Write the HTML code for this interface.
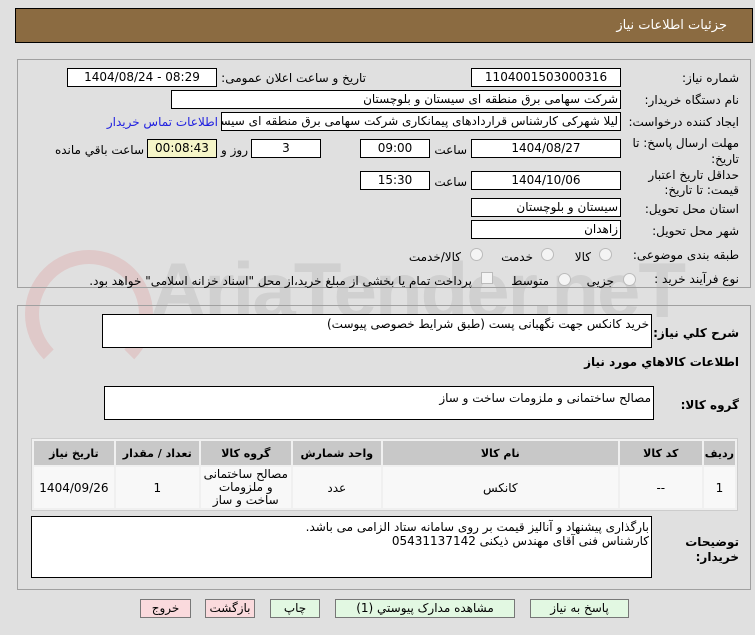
<!DOCTYPE html>
<html><head><meta charset="utf-8"><style>
body{margin:0;width:755px;height:635px;background:#e0e0e0;font-family:"DejaVu Sans","Liberation Sans",sans-serif;font-size:12px;color:#000;position:relative;overflow:hidden}
.a{position:absolute;white-space:nowrap}
.box{position:absolute;background:#fff;border:1px solid #000;box-sizing:border-box;height:19px;line-height:17px;text-align:center;font-size:12px;overflow:hidden;white-space:nowrap}
.r{text-align:right;padding-right:2px;direction:rtl}
.l{direction:rtl;text-align:right}
.panel{position:absolute;border:1px solid #a0a0a0;box-sizing:border-box}
.rad{position:absolute;width:11px;height:11px;border-radius:50%;border:1px solid #bbb;background:#f4f4f4}
.btn{position:absolute;top:599px;height:19px;border:1px solid #777;box-sizing:border-box;text-align:center;line-height:17px;font-size:12px}
table{position:absolute;border-collapse:separate;border-spacing:2px;background:#f0f0f0;border:1px solid #ccc}
td{text-align:center;font-size:12px}
th{background:#c8c8c8;font-weight:bold;height:22px;font-size:11px}
.b{font-weight:bold;font-size:12px}
</style></head><body>
<div class="a" style="left:150px;top:245px;font-size:78px;font-weight:bold;color:rgba(150,150,150,0.22);font-family:'Liberation Sans',sans-serif;letter-spacing:-2px">AriaTender.neT</div>
<div class="a" style="left:25px;top:250px;width:100px;height:100px;border:14px solid rgba(220,120,120,0.22);border-radius:50%;border-bottom-color:transparent"></div>

<div class="a" style="left:15px;top:8px;width:738px;height:35px;background:#8b6b41;border:1px solid #000;box-sizing:border-box"></div>
<div class="a l" style="right:28px;top:18px;color:#fff;font-size:13px">جزئیات اطلاعات نیاز</div>

<div class="panel" style="left:17px;top:59px;width:734px;height:229px"></div>
<div class="a l" style="right:16px;top:71px">شماره نیاز:</div>
<div class="box" style="left:471px;top:68px;width:150px">1104001503000316</div>
<div class="a l" style="right:389px;top:71px">تاریخ و ساعت اعلان عمومی:</div>
<div class="box" style="left:67px;top:68px;width:150px">1404/08/24 - 08:29</div>

<div class="a l" style="right:16px;top:93px">نام دستگاه خریدار:</div>
<div class="box r" style="left:171px;top:90px;width:450px">شرکت سهامی برق منطقه ای سیستان و بلوچستان</div>

<div class="a l" style="right:16px;top:115px">ایجاد کننده درخواست:</div>
<div class="box r" style="left:221px;top:112px;width:400px">لیلا شهرکی کارشناس قراردادهای پیمانکاری شرکت سهامی برق منطقه ای سیستان</div>
<div class="a l" style="right:537px;top:115px;color:#2020e0">اطلاعات تماس خریدار</div>

<div class="a l" style="right:16px;top:136px">مهلت ارسال پاسخ: تا</div>
<div class="a l" style="right:16px;top:152px">تاریخ:</div>
<div class="box" style="left:471px;top:139px;width:150px">1404/08/27</div>
<div class="a l" style="right:288px;top:143px">ساعت</div>
<div class="box" style="left:360px;top:139px;width:70px">09:00</div>
<div class="box" style="left:251px;top:139px;width:70px">3</div>
<div class="a l" style="right:507px;top:143px">روز و</div>
<div class="box" style="left:147px;top:139px;width:70px;background:#f5f5c8">00:08:43</div>
<div class="a l" style="right:611px;top:143px">ساعت باقي مانده</div>

<div class="a l" style="right:16px;top:168px">حداقل تاریخ اعتبار</div>
<div class="a l" style="right:16px;top:183px">قیمت: تا تاریخ:</div>
<div class="box" style="left:471px;top:171px;width:150px">1404/10/06</div>
<div class="a l" style="right:288px;top:175px">ساعت</div>
<div class="box" style="left:360px;top:171px;width:70px">15:30</div>

<div class="a l" style="right:16px;top:202px">استان محل تحویل:</div>
<div class="box r" style="left:471px;top:198px;width:150px">سیستان و بلوچستان</div>
<div class="a l" style="right:16px;top:224px">شهر محل تحویل:</div>
<div class="box r" style="left:471px;top:220px;width:150px">زاهدان</div>

<div class="a l" style="right:16px;top:248px">طبقه بندی موضوعی:</div>
<div class="rad" style="left:599px;top:248px"></div><div class="a l" style="right:164px;top:250px">کالا</div>
<div class="rad" style="left:541px;top:248px"></div><div class="a l" style="right:222px;top:250px">خدمت</div>
<div class="rad" style="left:470px;top:248px"></div><div class="a l" style="right:294px;top:250px">کالا/خدمت</div>

<div class="a l" style="right:16px;top:272px">نوع فرآیند خرید :</div>
<div class="rad" style="left:623px;top:273px"></div><div class="a l" style="right:141px;top:274px">جزیی</div>
<div class="rad" style="left:558px;top:273px"></div><div class="a l" style="right:206px;top:274px">متوسط</div>
<div class="a" style="left:481px;top:272px;width:10px;height:10px;border:1px solid #bbb;background:#f4f4f4"></div>
<div class="a l" style="right:283px;top:274px">پرداخت تمام یا بخشی از مبلغ خرید،از محل "اسناد خزانه اسلامی" خواهد بود.</div>

<div class="panel" style="left:17px;top:305px;width:734px;height:285px"></div>
<div class="a l b" style="right:16px;top:326px">شرح کلي نیاز:</div>
<div class="box r" style="left:102px;top:314px;width:550px;height:34px;line-height:18px">خرید کانکس جهت نگهبانی پست (طبق شرایط خصوصی پیوست)</div>
<div class="a l b" style="right:16px;top:355px">اطلاعات کالاهاي مورد نیاز</div>
<div class="a l b" style="right:16px;top:398px">گروه کالا:</div>
<div class="box r" style="left:104px;top:386px;width:550px;height:34px;line-height:22px">مصالح ساختمانی و ملزومات ساخت و ساز</div>

<table style="left:31px;top:438px;width:707px;direction:rtl">
<tr><th style="width:26px">ردیف</th><th style="width:80px">کد کالا</th><th style="width:233px">نام کالا</th><th style="width:86px">واحد شمارش</th><th style="width:88px">گروه کالا</th><th style="width:81px">تعداد / مقدار</th><th>تاریخ نیاز</th></tr>
<tr style="background:#f8f8f8;height:40px"><td>1</td><td>--</td><td>کانکس</td><td>عدد</td><td style="line-height:13px">مصالح ساختمانی و ملزومات ساخت و ساز</td><td>1</td><td>1404/09/26</td></tr>
</table>

<div class="a l b" style="right:16px;top:535px">توضیحات</div>
<div class="a l b" style="right:16px;top:550px">خریدار:</div>
<div class="box r" style="left:31px;top:516px;width:621px;height:62px;line-height:14px;text-align:right;padding-top:3px;white-space:normal">بارگذاری پیشنهاد و آنالیز قیمت بر روی سامانه ستاد الزامی می باشد.<br>کارشناس فنی آقای مهندس ذیکنی 05431137142</div>

<div class="btn" style="left:140px;width:51px;background:#fadadd">خروج</div>
<div class="btn" style="left:205px;width:50px;background:#fadadd">بازگشت</div>
<div class="btn" style="left:270px;width:50px;background:#e2f8e2">چاپ</div>
<div class="btn" style="left:335px;width:180px;background:#e2f8e2">مشاهده مدارک پیوستي (1)</div>
<div class="btn" style="left:530px;width:99px;background:#e2f8e2">پاسخ به نیاز</div>
</body></html>
